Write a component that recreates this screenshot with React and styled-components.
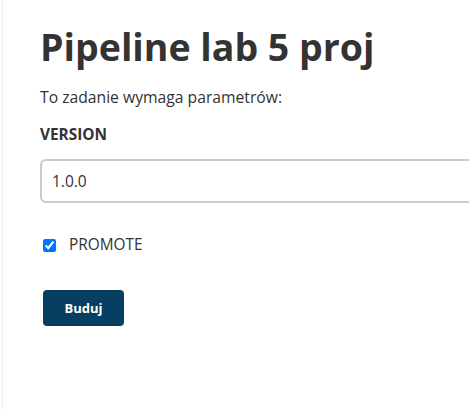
import React from "react";
import styled, { createGlobalStyle } from "styled-components";

const GlobalStyle = createGlobalStyle`
  html, body {
    margin: 0;
    padding: 0;
    background: #ffffff;
  }
  body {
    font-family: "Open Sans", "Noto Sans", sans-serif;
    color: #333333;
  }
`;

const Page = styled.div`
  display: flex;
  height: 411px;
  overflow: hidden;
`;

const Sidebar = styled.div`
  width: 2px;
  height: 409px;
  border-right: 1px solid #ececec;
  flex-shrink: 0;
`;

const Main = styled.div`
  flex: 1;
  padding: 21px 0 0 37px;
  min-width: 0;
`;

const Heading = styled.h1`
  margin: 0;
  font-size: 37.5px;
  font-weight: 700;
  line-height: 52px;
  color: #333333;
`;

const Intro = styled.p`
  margin: 14px 0 0;
  font-size: 15.7px;
  line-height: 20px;
`;

const Form = styled.form`
  display: flex;
  flex-direction: column;
`;

const Label = styled.label`
  margin-top: 18px;
  font-size: 15.4px;
  font-weight: 700;
  line-height: 20px;
`;

const TextInput = styled.input`
  margin-top: 14px;
  box-sizing: border-box;
  width: 460px;
  height: 44px;
  padding: 0 10px;
  border: 2px solid #c5cdd0;
  border-radius: 6px;
  font-family: inherit;
  font-size: 15.5px;
  color: #333333;
  outline: none;
`;

const CheckRow = styled.label`
  display: flex;
  align-items: center;
  gap: 13px;
  margin-top: 32px;
  padding-left: 3px;
  font-size: 15.4px;
  line-height: 20px;
`;

const Check = styled.input`
  margin: 0;
  width: 13px;
  height: 13px;
  accent-color: #0075ff;
`;

const Actions = styled.div`
  margin-top: 35px;
  padding-left: 3px;
`;

const Button = styled.button`
  width: 81px;
  height: 36px;
  border: none;
  border-radius: 4px;
  background: #073f63;
  color: #ffffff;
  font-family: inherit;
  font-size: 13px;
  font-weight: 700;
  cursor: pointer;
`;

export default function App() {
  return (
    <Page>
      <GlobalStyle />
      <Sidebar />
      <Main>
        <Heading>Pipeline lab 5 proj</Heading>
        <Intro>To zadanie wymaga parametrów:</Intro>
        <Form onSubmit={(e) => e.preventDefault()}>
          <Label htmlFor="version">VERSION</Label>
          <TextInput id="version" defaultValue="1.0.0" />
          <CheckRow>
            <Check type="checkbox" defaultChecked />
            PROMOTE
          </CheckRow>
          <Actions>
            <Button type="submit">Buduj</Button>
          </Actions>
        </Form>
      </Main>
    </Page>
  );
}
